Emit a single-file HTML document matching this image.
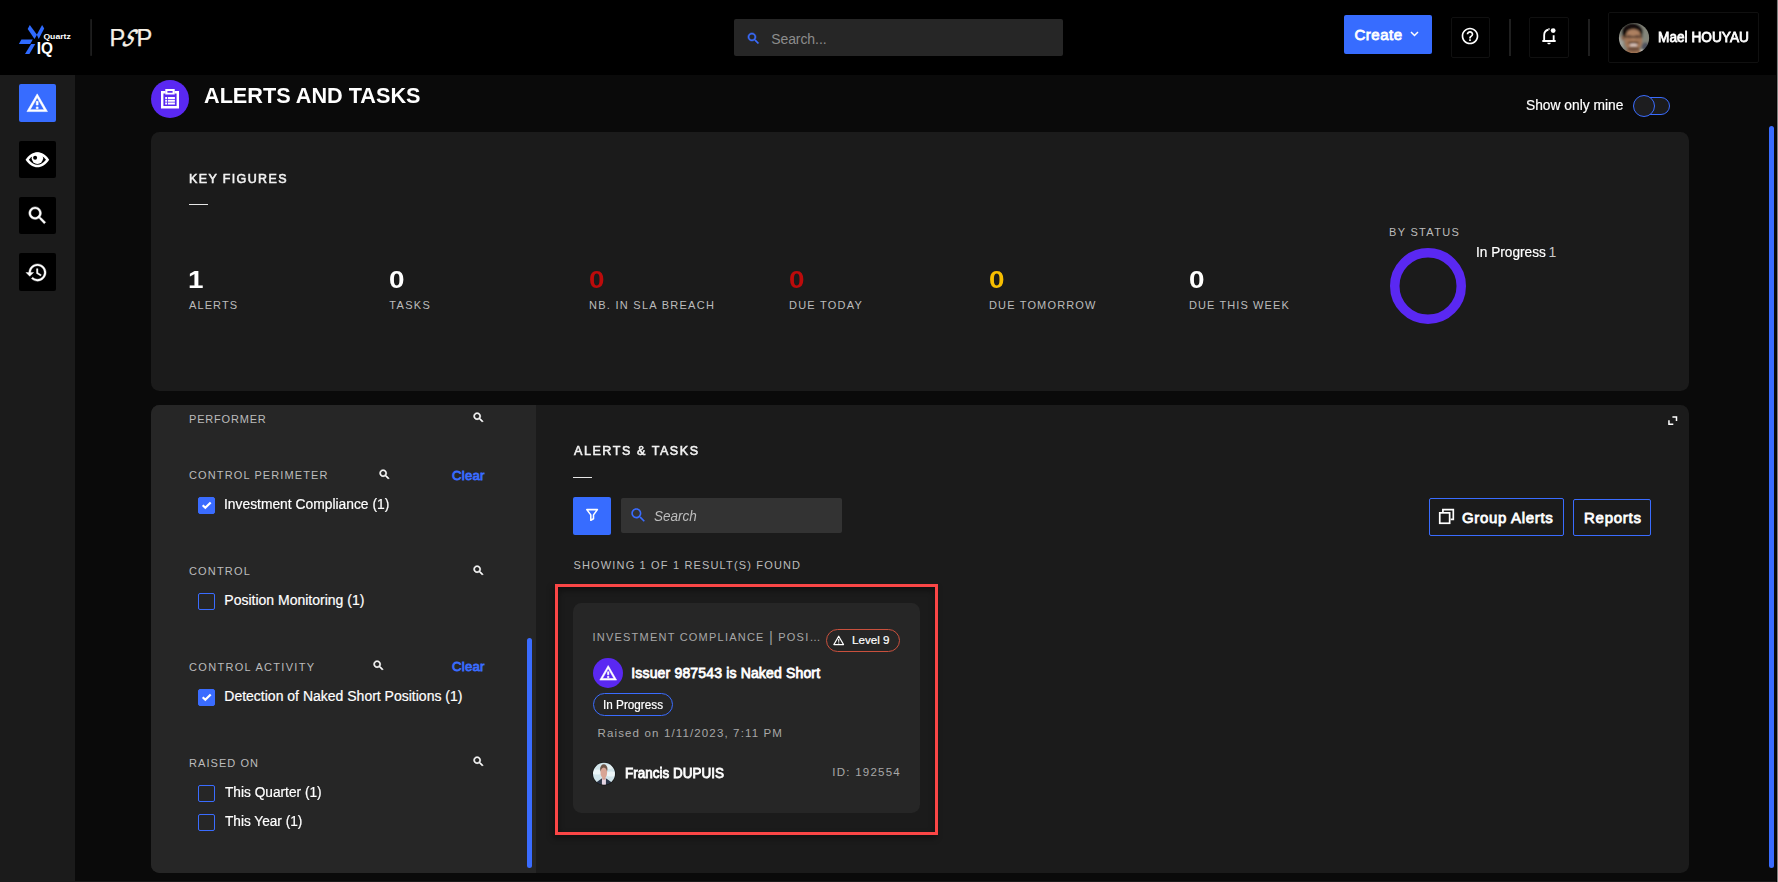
<!DOCTYPE html>
<html lang="en">
<head>
<meta charset="utf-8">
<title>Alerts and Tasks</title>
<style>
*{box-sizing:border-box;margin:0;padding:0}
html,body{width:1778px;height:882px;overflow:hidden;background:#0a0a0a}
body{position:relative;font-family:"Liberation Sans",sans-serif;color:#fff;-webkit-font-smoothing:antialiased}
.abs{position:absolute}
.t{position:absolute;white-space:nowrap;line-height:1;display:block}
svg{position:absolute;display:block;overflow:visible}
#header{position:absolute;left:0;top:0;width:1778px;height:75px;background:#000}
#sidebar{position:absolute;left:0;top:75px;width:75px;height:807px;background:#1b1b1b}
.sbtn{position:absolute;left:19px;width:37px;background:#000;border-radius:2px}
.card{position:absolute;background:#1b1b1b;border-radius:8.5px}
.lbl{color:#bcbcbc;font-size:11px;letter-spacing:1.5px}
.num{font-size:23px;font-weight:bold;transform-origin:0 0;transform:scaleX(1.21)}
.hbox{position:absolute;border:1px solid #101010;border-radius:2px}
.vdiv{position:absolute;width:2px;background:#1f1f1f;top:19px;height:37px}
.cb{position:absolute;left:198px;width:17px;height:17px;border-radius:2px;border:1px solid #3a6cff}
.cb.on{background:#3a6cff}
.item{font-size:14px;color:#fff;left:224.3px;-webkit-text-stroke:0.2px}
.clear{font-size:13.2px;font-weight:bold;color:#3a6cff;left:452px}
</style>
</head>
<body>

<!-- ============ HEADER ============ -->
<div id="header">
  <!-- logo -->
  <svg style="left:0;top:0" width="160" height="75" viewBox="0 0 160 75">
    <g fill="#2f6bff">
      <polygon points="27.7,28.9 29.8,25.1 37.0,34.8 34.5,39.0"/>
      <polygon points="42.1,25.1 44.2,28.5 38.7,39.0 36.8,34.8"/>
      <polygon points="21.4,39.5 32.8,39.5 30.2,44.1 18.9,44.1"/>
      <polygon points="31.1,44.1 35.3,44.1 29.4,54.0 25.0,54.0"/>
    </g>
    <text x="43.4" y="38.6" font-family="Liberation Sans, sans-serif" font-size="7.8" font-weight="bold" fill="#fff" textLength="27.4" lengthAdjust="spacingAndGlyphs">Quartz</text>
    <text x="36.8" y="53.8" font-family="Liberation Sans, sans-serif" font-size="15.8" font-weight="bold" fill="#fff" textLength="16.2" lengthAdjust="spacingAndGlyphs">IQ</text>
    <rect x="90.3" y="19.2" width="1.6" height="36.6" fill="#222"/>
  </svg>

  <span class="t" id="psp" style="left:109.400px;top:26.700px;font-size:23.600px;color:#f6f1e7;-webkit-text-stroke:0.250px #f6f1e7">P<span style="display:inline-block;margin-left:-4.940px;margin-right:0.660px;transform-origin:0 84.650%;transform:skewX(-31deg) scaleX(0.640);-webkit-text-stroke:0.700px #f6f1e7">S</span>P</span>

  <!-- search -->
  <div class="abs" style="left:734.300px;top:19px;width:328.600px;height:37px;background:#262626;border-radius:2px"></div>
  <svg style="left:745.6px;top:31.200px" width="15" height="15" viewBox="0 0 24 24"><path fill="#3a6cff" stroke="#3a6cff" stroke-width="0.800" d="M15.5 14h-.79l-.28-.27C15.41 12.59 16 11.11 16 9.5 16 5.91 13.09 3 9.5 3S3 5.91 3 9.5 5.91 16 9.5 16c1.61 0 3.09-.59 4.23-1.57l.27.28v.79l5 4.99L20.49 19l-4.99-5zm-6 0C7.01 14 5 11.99 5 9.5S7.01 5 9.5 5 14 7.01 14 9.5 11.99 14 9.5 14z"/></svg>
  <span class="t" id="hsearch" style="left:771.2px;top:31.500px;font-size:14px;color:#8c8c8c;letter-spacing:-0.08px">Search...</span>

  <!-- create -->
  <div class="abs" style="left:1344px;top:15px;width:88px;height:39px;background:#376cff;border-radius:2px"></div>
  <span class="t" id="create" style="left:1354.5px;top:27px;font-size:15px;font-weight:normal;-webkit-text-stroke:0.8px;color:#fff;letter-spacing:0.50px">Create</span>
  <svg style="left:1409.5px;top:30.5px" width="9" height="6" viewBox="0 0 9 6"><path d="M1 1 L4.5 4.5 L8 1" fill="none" stroke="#fff" stroke-width="1.5"/></svg>

  <!-- help -->
  <div class="hbox" style="left:1451px;top:17px;width:39px;height:40.5px"></div>
  <svg style="left:1460.1px;top:25.8px" width="20" height="20" viewBox="0 0 24 24"><path fill="#fff" d="M11 18h2v-2h-2v2zm1-16C6.48 2 2 6.48 2 12s4.480 10 10 10 10-4.480 10-10S17.520 2 12 2zm0 18c-4.410 0-8-3.590-8-8s3.590-8 8-8 8 3.590 8 8-3.590 8-8 8zm0-14c-2.210 0-4 1.790-4 4h2c0-1.100.9-2 2-2s2 .9 2 2c0 2-3 1.750-3 5h2c0-2.250 3-2.500 3-5 0-2.210-1.790-4-4-4z"/></svg>
  <div class="vdiv" style="left:1509px"></div>

  <!-- bell -->
  <div class="hbox" style="left:1529px;top:17px;width:40px;height:40.5px"></div>
  <svg style="left:1539.0px;top:25.8px" width="20" height="20" viewBox="0 0 24 24">
    <path fill="#fff" d="M12 22c1.100 0 2-.9 2-2h-4c0 1.100.9 2 2 2z"/>
    <path fill="none" stroke="#fff" stroke-width="2.2" d="M4 18h16 M6.200 18v-7c0-3.200 2.100-5.800 5-6.500 M17.600 18v-7"/>
    <path fill="none" stroke="#fff" stroke-width="1.600" d="M12 2.600v2"/>
    <circle cx="17.0" cy="5.500" r="2.900" fill="#fff"/>
  </svg>
  <div class="vdiv" style="left:1588px"></div>

  <!-- user -->
  <div class="hbox" style="left:1608px;top:12px;width:151px;height:50.5px"></div>
  <svg style="left:1619px;top:23px" width="30" height="30" viewBox="0 0 30 30">
    <defs><clipPath id="c1"><circle cx="15" cy="15" r="15.100"/></clipPath>
    <filter id="b1" x="-20%" y="-20%" width="140%" height="140%"><feGaussianBlur stdDeviation="0.900"/></filter></defs>
    <g clip-path="url(#c1)"><g filter="url(#b1)">
      <rect x="-4" y="-4" width="38" height="38" fill="#83857a"/>
      <rect x="-2" y="14" width="6" height="18" fill="#a2a39b"/>
      <ellipse cx="26.500" cy="24" rx="4" ry="4.500" fill="#50525e"/>
      <ellipse cx="13.300" cy="9" rx="10.600" ry="9.300" fill="#15110d"/>
      <ellipse cx="3.800" cy="15" rx="1.600" ry="2.600" fill="#8a6045"/>
      <ellipse cx="14.300" cy="17.500" rx="8.900" ry="11.300" fill="#a27656"/>
      <ellipse cx="14.300" cy="9.800" rx="6.300" ry="3.200" fill="#ad8060"/>
      <ellipse cx="14.500" cy="31" rx="13" ry="4.500" fill="#a07454"/>
      <path d="M21.500 26.500l5 1.500l-3.500 4z" fill="#e6e4de"/>
      <rect x="5" y="13" width="18.500" height="1.400" fill="#2e221c"/>
      <ellipse cx="10" cy="13.600" rx="2.700" ry="1.500" fill="#5e4234"/>
      <ellipse cx="18.300" cy="13.600" rx="2.700" ry="1.500" fill="#5e4234"/>
      <ellipse cx="14.300" cy="17" rx="1.800" ry="1.500" fill="#b08262"/>
      <ellipse cx="14.500" cy="20" rx="5.800" ry="1.400" fill="#5a3c2c"/>
      <ellipse cx="14.500" cy="22" rx="3.900" ry="1.600" fill="#e6d0c8"/>
      <ellipse cx="14.500" cy="26" rx="6.300" ry="2.500" fill="#70503c"/>
    </g></g>
  </svg>
  <span class="t" id="uname" style="left:1658px;top:30px;font-size:14.500px;font-weight:normal;-webkit-text-stroke:0.8px;color:#fff;transform-origin:0 0;transform:scaleX(0.9427)">Mael HOUYAU</span>
</div>

<!-- ============ SIDEBAR ============ -->
<div id="sidebar"></div>
<div class="sbtn" style="top:84px;height:38px;background:#376cff"></div>
<div class="sbtn" style="top:141px;height:37px"></div>
<div class="sbtn" style="top:197px;height:37px"></div>
<div class="sbtn" style="top:253px;height:38px"></div>
<svg style="left:26.300px;top:92.300px" width="22.400" height="22.400" viewBox="0 0 24 24"><path fill="#fff" stroke="#fff" stroke-width="0.600" d="M12 5.990L19.530 19H4.470L12 5.990M12 2L1 21h22L12 2zm1 14h-2v2h2v-2zm0-6h-2v4h2v-4z"/></svg>
<svg style="left:0;top:0" width="75" height="300" viewBox="0 0 75 300">
  <path fill="#fff" d="M25.600 159.650C29.500 154.200 33 152.200 37.400 152.200S45.300 154.200 49.200 159.650C45.300 165.200 41.800 167.150 37.400 167.150S29.500 165.200 25.600 159.650Z"/>
  <path fill="#000" d="M28.800 159.650C31.700 156.300 34.200 154.800 37.400 154.800S43.100 156.300 46 159.650C43.100 163.200 40.600 164.700 37.400 164.700S31.700 163.200 28.800 159.650Z"/>
  <circle cx="37.400" cy="158.300" r="5.700" fill="#fff"/>
  <circle cx="35.100" cy="157.700" r="2" fill="#000"/>
</svg>
<svg style="left:26px;top:204px" width="23" height="23" viewBox="0 0 24 24"><path fill="#fff" stroke="#fff" stroke-width="0.500" d="M15.500 14h-.79l-.28-.27C15.410 12.590 16 11.110 16 9.500 16 5.910 13.090 3 9.500 3S3 5.910 3 9.500 5.910 16 9.500 16c1.610 0 3.090-.59 4.230-1.570l.27.280v.79l5 4.990L20.490 19l-4.990-5zm-6 0C7.010 14 5 11.990 5 9.500S7.010 5 9.500 5 14 7.010 14 9.500 11.990 14 9.500 14z"/></svg>
<svg style="left:25.300px;top:260.500px" width="23" height="23" viewBox="0 0 24 24"><path fill="#fff" stroke="#fff" stroke-width="0.400" d="M13 3c-4.970 0-9 4.030-9 9H1l3.890 3.890.07.140L9 12H6c0-3.870 3.130-7 7-7s7 3.130 7 7-3.130 7-7 7c-1.930 0-3.680-.79-4.940-2.060l-1.420 1.420C8.270 19.990 10.510 21 13 21c4.970 0 9-4.030 9-9s-4.030-9-9-9zm-1 5v5l4.280 2.540.72-1.210-3.500-2.080V8H12z"/></svg>

<!-- ============ PAGE TITLE ============ -->
<div class="abs" style="left:151px;top:80px;width:38px;height:38px;border-radius:50%;background:#5a28f2"></div>
<svg style="left:161px;top:89px" width="18" height="19.500" viewBox="0 0 18 19.500">
  <path fill="none" stroke="#fff" stroke-width="2.400" d="M4.500 3.200H1.200V18.300H16.800V3.200H13.500"/>
  <path fill="#fff" fill-rule="evenodd" d="M4.300 0h9.400v5.600H4.300z M6.400 2v1.700h5.200V2z"/>
  <path fill="#fff" d="M4.200 8h1.900v2.100H4.200z M6.900 8h7v2.100h-7z M4.200 10.700h1.900v2.100H4.200z M6.900 10.700h7v2.100h-7z M4.200 13.400h1.900v2.100H4.200z M6.900 13.400h7v2.100h-7z"/>
</svg>
<span class="t" id="ptitle" style="left:204px;top:84.6px;font-size:22px;font-weight:bold;color:#fff;transform-origin:0 0;transform:scaleX(0.9841)">ALERTS AND TASKS</span>

<span class="t" id="showmine" style="left:1526px;top:98px;font-size:14.500px;color:#fff;-webkit-text-stroke:0.2px;transform-origin:0 0;transform:scaleX(0.9510)">Show only mine</span>
<div class="abs" style="left:1639px;top:96.800px;width:30.700px;height:18.700px;border:1.300px solid #3a6cff;border-radius:9.500px;background:#1b1b1b"></div>
<div class="abs" style="left:1632.700px;top:95px;width:22px;height:22px;border:1.300px solid #3a6cff;border-radius:50%;background:#1d1d1f"></div>

<!-- ============ KEY FIGURES ============ -->
<div class="card" style="left:151px;top:132px;width:1538px;height:259px"></div>
<span class="t" id="kf" style="left:189px;top:171.8px;font-size:13.6px;font-weight:normal;-webkit-text-stroke:0.6px;color:#f2f2f2;letter-spacing:1.50px;transform-origin:0 0;transform:scaleX(0.9188)">KEY FIGURES</span>
<div class="abs" style="left:189px;top:203.500px;width:19px;height:1.500px;background:#e6e6e6"></div>

<span class="t num" id="n1" style="left:188px;top:268.8px">1</span>
<span class="t lbl" id="l1" style="left:189px;top:300px;letter-spacing:1.10px">ALERTS</span>
<span class="t num" id="n2" style="left:389px;top:268.8px">0</span>
<span class="t lbl" id="l2" style="left:389.3px;top:300px;letter-spacing:1.3px">TASKS</span>
<span class="t num" id="n3" style="left:589px;top:268.8px;color:#bc0b0b">0</span>
<span class="t lbl" id="l3" style="left:589px;top:300px;letter-spacing:1.27px">NB. IN SLA BREACH</span>
<span class="t num" id="n4" style="left:789px;top:268.8px;color:#bc0b0b">0</span>
<span class="t lbl" id="l4" style="left:789px;top:300px;letter-spacing:1.24px">DUE TODAY</span>
<span class="t num" id="n5" style="left:989px;top:268.8px;color:#f7be00">0</span>
<span class="t lbl" id="l5" style="left:989px;top:300px;letter-spacing:1.16px">DUE TOMORROW</span>
<span class="t num" id="n6" style="left:1189px;top:268.8px">0</span>
<span class="t lbl" id="l6" style="left:1189px;top:300px;letter-spacing:1.10px">DUE THIS WEEK</span>

<span class="t lbl" id="bystatus" style="left:1389px;top:227px;letter-spacing:1.31px">BY STATUS</span>
<svg style="left:1390px;top:248px" width="76" height="76" viewBox="0 0 76 76"><circle cx="38" cy="38" r="33.250" fill="none" stroke="#5a28f2" stroke-width="9.500"/></svg>
<span class="t" id="inprog" style="left:1475.8px;top:245px;font-size:14px;color:#fff;-webkit-text-stroke:0.2px;transform-origin:0 0;transform:scaleX(0.9748)">In Progress</span>
<span class="t" id="inprog1" style="left:1548.5px;top:245px;font-size:14px;color:#c8c8c8">1</span>

<!-- ============ LOWER PANEL ============ -->
<div class="card" style="left:151px;top:405px;width:1538px;height:468px;overflow:hidden">
  <div class="abs" style="left:0;top:0;width:385px;height:468px;background:#262626"></div>
</div>

<!-- filters -->
<span class="t lbl" id="f1" style="left:189px;top:414px;letter-spacing:0.81px">PERFORMER</span>
<svg style="left:471.8px;top:411px" width="13" height="13" viewBox="0 0 24 24"><path fill="#fff" stroke="#fff" stroke-width="1.1" d="M15.5 14h-.79l-.28-.27C15.41 12.59 16 11.11 16 9.5 16 5.91 13.09 3 9.5 3S3 5.91 3 9.5 5.91 16 9.5 16c1.61 0 3.09-.59 4.23-1.570l.27.28v.79l5 4.990L20.49 19l-4.990-5zm-6 0C7.01 14 5 11.990 5 9.500S7.01 5 9.500 5 14 7.010 14 9.500 11.990 14 9.500 14z"/></svg>
<span class="t lbl" id="f2" style="left:189px;top:470px;letter-spacing:1.12px">CONTROL PERIMETER</span>
<svg style="left:377.8px;top:468px" width="13" height="13" viewBox="0 0 24 24"><path fill="#fff" stroke="#fff" stroke-width="1.1" d="M15.5 14h-.79l-.28-.27C15.41 12.59 16 11.11 16 9.5 16 5.91 13.09 3 9.5 3S3 5.91 3 9.5 5.91 16 9.5 16c1.61 0 3.09-.59 4.23-1.570l.27.28v.79l5 4.990L20.49 19l-4.990-5zm-6 0C7.01 14 5 11.990 5 9.500S7.01 5 9.500 5 14 7.010 14 9.500 11.990 14 9.500 14z"/></svg>
<span class="t clear" id="c1t" style="top:469.2px;font-weight:normal;-webkit-text-stroke:0.8px;letter-spacing:0.25px">Clear</span>
<div class="cb on" style="top:497px"><svg style="left:-1px;top:-1px" width="17" height="17" viewBox="0 0 17 17"><path d="M4.700 8.300 L7.300 10.800 L12.700 5.500" fill="none" stroke="#fff" stroke-width="2.200"/></svg></div>
<span class="t item" id="i1" style="top:497.2px;transform-origin:0 0;transform:scaleX(0.9880)">Investment Compliance (1)</span>

<span class="t lbl" id="f3" style="left:189px;top:566px;letter-spacing:1.17px">CONTROL</span>
<svg style="left:471.8px;top:564px" width="13" height="13" viewBox="0 0 24 24"><path fill="#fff" stroke="#fff" stroke-width="1.1" d="M15.5 14h-.79l-.28-.27C15.41 12.59 16 11.11 16 9.5 16 5.91 13.09 3 9.5 3S3 5.91 3 9.5 5.91 16 9.5 16c1.61 0 3.09-.59 4.23-1.570l.27.28v.79l5 4.990L20.49 19l-4.990-5zm-6 0C7.01 14 5 11.990 5 9.500S7.01 5 9.500 5 14 7.010 14 9.500 11.990 14 9.500 14z"/></svg>
<div class="cb" style="top:593px"></div>
<span class="t item" id="i2" style="top:593.2px">Position Monitoring (1)</span>

<span class="t lbl" id="f4" style="left:189px;top:662px;letter-spacing:1.32px">CONTROL ACTIVITY</span>
<svg style="left:371.8px;top:659px" width="13" height="13" viewBox="0 0 24 24"><path fill="#fff" stroke="#fff" stroke-width="1.1" d="M15.5 14h-.79l-.28-.27C15.41 12.59 16 11.11 16 9.5 16 5.91 13.09 3 9.5 3S3 5.91 3 9.5 5.91 16 9.5 16c1.61 0 3.09-.59 4.23-1.570l.27.28v.79l5 4.990L20.49 19l-4.990-5zm-6 0C7.01 14 5 11.990 5 9.500S7.01 5 9.500 5 14 7.010 14 9.500 11.990 14 9.500 14z"/></svg>
<span class="t clear" id="c2t" style="top:660.4px;font-weight:normal;-webkit-text-stroke:0.8px;letter-spacing:0.25px">Clear</span>
<div class="cb on" style="top:689px"><svg style="left:-1px;top:-1px" width="17" height="17" viewBox="0 0 17 17"><path d="M4.700 8.300 L7.300 10.800 L12.700 5.500" fill="none" stroke="#fff" stroke-width="2.200"/></svg></div>
<span class="t item" id="i3" style="top:689.2px">Detection of Naked Short Positions (1)</span>

<span class="t lbl" id="f5" style="left:189px;top:758px;letter-spacing:1.06px">RAISED ON</span>
<svg style="left:471.8px;top:755px" width="13" height="13" viewBox="0 0 24 24"><path fill="#fff" stroke="#fff" stroke-width="1.1" d="M15.5 14h-.79l-.28-.27C15.41 12.59 16 11.11 16 9.5 16 5.91 13.09 3 9.5 3S3 5.91 3 9.5 5.91 16 9.5 16c1.61 0 3.09-.59 4.23-1.570l.27.28v.79l5 4.990L20.49 19l-4.990-5zm-6 0C7.01 14 5 11.990 5 9.500S7.01 5 9.500 5 14 7.010 14 9.500 11.990 14 9.500 14z"/></svg>
<div class="cb" style="top:785px"></div>
<span class="t item" id="i4" style="left:225px;top:784.6px;transform-origin:0 0;transform:scaleX(0.9778)">This Quarter (1)</span>
<div class="cb" style="top:814px"></div>
<span class="t item" id="i5" style="left:225px;top:814.4px;transform-origin:0 0;transform:scaleX(0.9747)">This Year (1)</span>

<div class="abs" style="left:527px;top:638px;width:5px;height:230px;border-radius:2.500px;background:#3a6cff"></div>

<!-- alerts & tasks -->
<span class="t" id="at" style="left:574px;top:444.2px;font-size:13.6px;font-weight:normal;-webkit-text-stroke:0.6px;color:#f2f2f2;letter-spacing:1.69px;transform-origin:0 0;transform:scaleX(0.9221)">ALERTS &amp; TASKS</span>
<div class="abs" style="left:573px;top:476.500px;width:19px;height:1.500px;background:#e6e6e6"></div>
<div class="abs" style="left:573px;top:497px;width:38px;height:38px;background:#376cff;border-radius:2px"></div>
<svg style="left:0;top:0" width="700" height="600" viewBox="0 0 700 600"><path fill="none" stroke="#fff" stroke-width="1.55" stroke-linejoin="round" d="M586.800 509.600H597.400L593.500 514.900V518.800L590.800 520.300V514.900Z"/></svg>
<div class="abs" style="left:621px;top:498px;width:221px;height:35px;background:#333;border-radius:2px"></div>
<svg style="left:629.2px;top:506.4px" width="18.6" height="18.6" viewBox="0 0 24 24"><path fill="#3a6cff" d="M15.5 14h-.79l-.28-.27C15.41 12.59 16 11.11 16 9.5 16 5.91 13.09 3 9.5 3S3 5.91 3 9.5 5.91 16 9.5 16c1.61 0 3.09-.59 4.23-1.570l.27.28v.79l5 4.990L20.49 19l-4.990-5zm-6 0C7.01 14 5 11.990 5 9.500S7.01 5 9.500 5 14 7.010 14 9.500 11.990 14 9.500 14z"/></svg>
<span class="t" id="search2" style="left:654px;top:508.500px;font-size:14px;font-style:italic;color:#bdbdbd;transform-origin:0 0;transform:scaleX(0.9659)">Search</span>
<span class="t lbl" id="showing" style="left:573.500px;top:560px;letter-spacing:1.16px">SHOWING 1 OF 1 RESULT(S) FOUND</span>

<!-- group alerts / reports -->
<div class="abs" style="left:1429px;top:497.500px;width:134.700px;height:38.500px;border:1.500px solid #3a6cff;border-radius:2px"></div>
<svg style="left:1438px;top:508px" width="17" height="17" viewBox="0 0 17 17">
  <path fill="none" stroke="#fff" stroke-width="1.700" d="M4.900 4.300V1.600H15.300V11.400H12.600"/>
  <rect x="1.750" y="4.850" width="9.900" height="10.400" fill="none" stroke="#fff" stroke-width="1.700"/>
</svg>
<span class="t" id="ga" style="left:1462px;top:509.5px;font-size:15px;font-weight:normal;-webkit-text-stroke:0.8px;color:#fff;letter-spacing:0.68px">Group Alerts</span>
<div class="abs" style="left:1573px;top:499px;width:77.800px;height:37px;border:1.500px solid #3a6cff;border-radius:2px"></div>
<span class="t" id="rep" style="left:1584px;top:509.5px;font-size:15px;font-weight:normal;-webkit-text-stroke:0.8px;color:#fff;letter-spacing:0.75px">Reports</span>

<!-- expand icon -->
<svg style="left:1668px;top:416px" width="10" height="10" viewBox="0 0 10 10">
  <path fill="none" stroke="#fff" stroke-width="1.500" d="M4.400 0.950H8.500V5"/>
  <path fill="none" stroke="#fff" stroke-width="1.500" d="M0.950 4.300V8.300H5.300"/>
</svg>

<!-- highlight box -->
<div class="abs" style="left:555px;top:584px;width:382.500px;height:251px;border:3px solid #fa4646;box-shadow:-2px 3px 6px rgba(0,0,0,.4), inset 0 3px 6px rgba(0,0,0,.45)"></div>

<!-- alert card -->
<div class="abs" style="left:573px;top:603px;width:347px;height:210px;background:#262626;border-radius:8.5px"></div>
<span class="t lbl" id="ac1" style="left:592.5px;top:632px;color:#a8a8a8;letter-spacing:1.22px">INVESTMENT COMPLIANCE <span style="font-size:15px;line-height:0;position:relative;top:0.5px;color:#9a9a9a">|</span> POSI…</span>
<div class="abs" style="left:826px;top:628.700px;width:74.300px;height:23.500px;border:1.200px solid #c9503d;border-radius:12px"></div>
<svg style="left:0;top:0" width="1000" height="700" viewBox="0 0 1000 700"><path fill="none" stroke="#fff" stroke-width="1.250" stroke-linejoin="round" d="M833.900 644.500H843.500L838.700 636.200Z"/><path fill="none" stroke="#fff" stroke-width="1.100" d="M838.700 639.100V641.700M838.700 642.400V643.500"/></svg>
<span class="t" id="lvl" style="left:852px;top:634.2px;font-size:11.600px;color:#fff;-webkit-text-stroke:0.2px">Level 9</span>

<div class="abs" style="left:593px;top:658px;width:30px;height:30px;border-radius:50%;background:#5a28f2"></div>
<svg style="left:598.900px;top:663.600px" width="18.4" height="18.4" viewBox="0 0 24 24"><path fill="#fff" stroke="#fff" stroke-width="0.7" d="M12 5.990L19.530 19H4.470L12 5.990M12 2L1 21h22L12 2zm1 14h-2v2h2v-2zm0-6h-2v4h2v-4z"/></svg>
<span class="t" id="issuer" style="left:631.3px;top:665.5px;font-size:14px;font-weight:normal;-webkit-text-stroke:0.8px;color:#fff;letter-spacing:0.16px">Issuer 987543 is Naked Short</span>

<div class="abs" style="left:593px;top:693px;width:80.300px;height:23px;border:1.200px solid #3a6cff;border-radius:12px"></div>
<span class="t" id="ip2" style="left:602.8px;top:699px;font-size:12px;color:#fff;-webkit-text-stroke:0.2px;transform-origin:0 0;transform:scaleX(0.9787)">In Progress</span>

<span class="t" id="raised" style="left:597.500px;top:727.500px;font-size:11.500px;color:#a8a8a8;letter-spacing:1.14px">Raised on 1/11/2023, 7:11 PM</span>

<svg style="left:592px;top:762px" width="24" height="24" viewBox="0 0 24 24">
  <defs><clipPath id="c2"><circle cx="12" cy="11.800" r="11"/></clipPath>
  <filter id="b2" x="-20%" y="-20%" width="140%" height="140%"><feGaussianBlur stdDeviation="0.700"/></filter></defs>
  <circle cx="12" cy="11.800" r="11.700" fill="#161616"/>
  <g clip-path="url(#c2)"><g filter="url(#b2)">
    <rect x="-3" y="-3" width="30" height="30" fill="#d2e5eb"/>
    <ellipse cx="5" cy="10" rx="5" ry="2.600" fill="#ecf5f7"/>
    <ellipse cx="19" cy="12" rx="5" ry="2.600" fill="#ecf5f7"/>
    <ellipse cx="17" cy="5" rx="4" ry="2" fill="#e4f0f3"/>
    <path d="M1 25 L5.500 19.600 L9.700 16.600 L14.200 16.600 L18.500 19.600 L23 25z" fill="#2b3547"/>
    <path d="M10 16.200 L13.900 16.200 L14 25 L9.900 25z" fill="#e4d4e2"/>
    <rect x="10.400" y="12" width="3" height="5.600" fill="#cf9c8c"/>
    <ellipse cx="11.800" cy="6.900" rx="3.700" ry="4.600" fill="#6e5648"/>
    <ellipse cx="11.800" cy="10.800" rx="3.300" ry="5.400" fill="#d8a595"/>
  </g></g>
</svg>
<span class="t" id="francis" style="left:625px;top:765.5px;font-size:14px;font-weight:normal;-webkit-text-stroke:0.8px;color:#fff;transform-origin:0 0;transform:scaleX(0.9631)">Francis DUPUIS</span>
<span class="t" id="idn" style="left:832.300px;top:767px;font-size:11.500px;color:#a8a8a8;letter-spacing:1.24px">ID: 192554</span>

<!-- ============ PAGE SCROLLBAR ============ -->
<div class="abs" style="left:75px;top:881px;width:1701px;height:1px;background:#1a1a1a"></div>
<div class="abs" style="left:1769.200px;top:126px;width:5.200px;height:742px;border-radius:2.600px;background:#3a6cff"></div>
<div class="abs" style="left:1776px;top:0;width:1px;height:882px;background:#050505"></div>
<div class="abs" style="left:1777px;top:0;width:1px;height:882px;background:#808080"></div>

</body>
</html>
